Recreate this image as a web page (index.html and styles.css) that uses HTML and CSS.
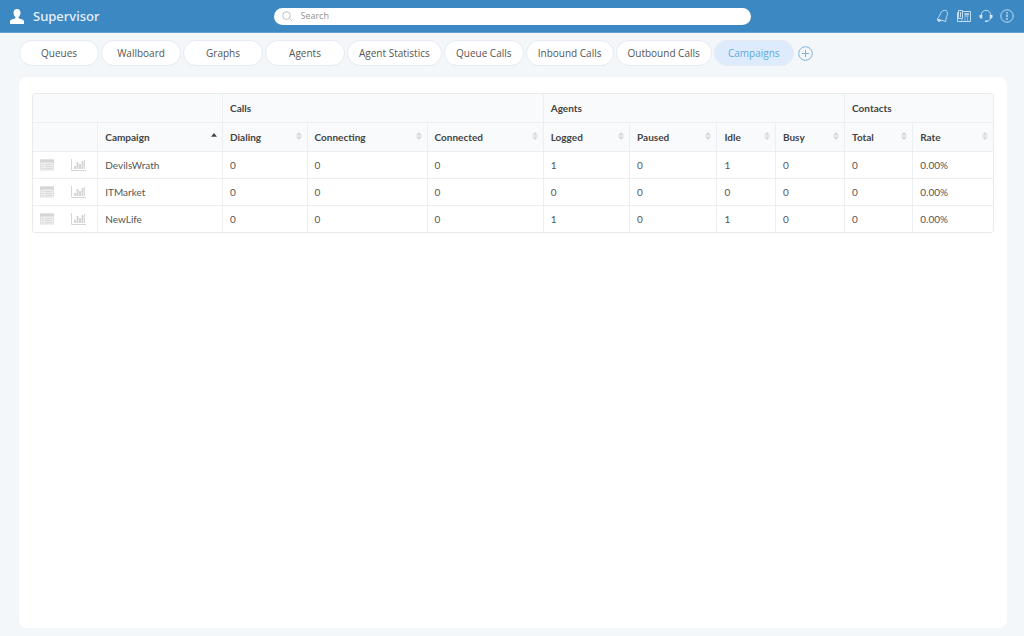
FILE: index.html
```html
<!DOCTYPE html>
<html lang="en">
<head>
<meta charset="utf-8">
<meta name="viewport" content="width=device-width, initial-scale=1">
<title>Supervisor</title>
<link rel="stylesheet" href="styles.css">
</head>
<body>
<svg class="sprite" aria-hidden="true">
  <symbol id="list" viewBox="0 0 14 12">
    <rect x=".5" y="1" width="13" height="10" fill="#efefef" stroke="#e0e0e0"/>
    <path d="M0 .500h14v3H0z" fill="#d6d6d6"/>
    <path d="M2 5.500h2M5 5.500h7M2 7.500h2M5 7.500h7M2 9.500h2M5 9.500h7" stroke="#dadada"/>
  </symbol>
  <symbol id="chart" viewBox="0 0 15 12">
    <path d="M.5 0v11.500H15" fill="none" stroke="#d6d6d6"/>
    <path d="M4 10V7M6.500 10V3M9 10V5M11.500 10V2" stroke="#d2d2d2" stroke-width="1.800"/>
    <path d="M13.500 10V1" stroke="#d6d6d6"/>
  </symbol>
  <symbol id="sort" viewBox="0 0 6 8">
    <path d="M3 0l3 3.500H0zM3 8l3-3.500H0z" fill="#d6d8da"/>
  </symbol>
</svg>
<header class="topbar">
  <div class="brand">
    <svg class="user" viewBox="0 0 14 15" aria-hidden="true"><path d="M7 0c2.100 0 3.500 1.500 3.500 3.700 0 1.700-.8 3.300-1.900 4.200v1.300l4.200 1.600c.8.300 1.200 1 1.200 1.800V15H0v-2.400c0-.8.400-1.500 1.200-1.800l4.200-1.600V7.900C4.300 7 3.500 5.400 3.500 3.700 3.500 1.500 4.900 0 7 0z"/></svg>
    <h1 class="title">Supervisor</h1>
  </div>
  <label class="search">
    <svg class="lens" viewBox="0 0 12 12" aria-hidden="true"><circle cx="5" cy="5" r="4.200"/><path d="M8 8l3 3"/></svg>
    <input class="search-input" type="search" placeholder="Search" aria-label="Search">
  </label>
  <div class="actions">
    <button class="icon-button" aria-label="Notifications"><svg viewBox="0 0 14 14"><path d="M2 10C4 8.500 4.500 7 5.500 4.500 6.500 2 9 .8 11 1.500c1.800 1 1.800 3.500.8 6-.8 2-1.300 3.500-.8 5z"/><path d="M2.500 10.500c-.3 2 2.200 2.800 3.500 1z" fill="#c4dcf1"/></svg></button>
    <button class="icon-button" aria-label="Phone"><svg class="wide" viewBox="0 0 16 14"><path d="M2.500 3.500h-1v9h13v-10H7M2.500 1.500h4v8h-4zM8.500 9h1M11 9h1M8.500 11h1M11 11h1M5.500 11h1M8.500 7h4M4.500 3v5"/><path d="M8.500 5h4.500" stroke-width="1.600"/></svg></button>
    <button class="icon-button" aria-label="Support"><svg viewBox="0 0 14 14"><path d="M2.300 6.500V6a4.700 4.700 0 0 1 9.400 0v.5M11.500 9c0 2-1.500 3-3.500 3.300"/><path d="M.5 6h2.800v3.400H1.700L.5 8.400zM13.500 6h-2.800v3.400h1.600l1.200-1zM6 11.500h2.500V13H6z" fill="#d5e5f4" stroke="none"/></svg></button>
    <button class="icon-button" aria-label="Information"><svg viewBox="0 0 14 14"><circle cx="7" cy="7" r="6.200"/><path d="M7 3v1.500M7 5.500v2.500M7 9v1.800" stroke-width="1.500"/></svg></button>
  </div>
</header>
<nav class="tabs" aria-label="Views">
  <button class="tab">Queues</button>
  <button class="tab">Wallboard</button>
  <button class="tab">Graphs</button>
  <button class="tab">Agents</button>
  <button class="tab">Agent Statistics</button>
  <button class="tab">Queue Calls</button>
  <button class="tab">Inbound Calls</button>
  <button class="tab">Outbound Calls</button>
  <button class="tab active" aria-current="page">Campaigns</button>
  <button class="add" aria-label="Add tab"><svg viewBox="0 0 15 15"><circle cx="7.500" cy="7.500" r="6.800"/><path d="M7.500 4v7M4 7.500h7"/></svg></button>
</nav>
<main class="panel">
  <table class="grid">
    <colgroup><col class="c-icons"><col class="c-campaign"><col class="c-dialing"><col class="c-connecting"><col class="c-connected"><col class="c-logged"><col class="c-paused"><col class="c-idle"><col class="c-busy"><col class="c-total"><col class="c-rate"></colgroup>
    <thead>
      <tr><th colspan="2"></th><th colspan="3">Calls</th><th colspan="4">Agents</th><th colspan="2">Contacts</th></tr>
      <tr>
        <th></th>
        <th aria-sort="ascending"><div class="head">Campaign<svg class="sort" viewBox="0 0 6 8"><path d="M3 1l3 3.800H0z" fill="#444"/></svg></div></th>
        <th><div class="head">Dialing<svg class="sort"><use href="#sort"/></svg></div></th>
        <th><div class="head">Connecting<svg class="sort"><use href="#sort"/></svg></div></th>
        <th><div class="head">Connected<svg class="sort"><use href="#sort"/></svg></div></th>
        <th><div class="head">Logged<svg class="sort"><use href="#sort"/></svg></div></th>
        <th><div class="head">Paused<svg class="sort"><use href="#sort"/></svg></div></th>
        <th><div class="head">Idle<svg class="sort"><use href="#sort"/></svg></div></th>
        <th><div class="head">Busy<svg class="sort"><use href="#sort"/></svg></div></th>
        <th><div class="head">Total<svg class="sort"><use href="#sort"/></svg></div></th>
        <th><div class="head">Rate<svg class="sort"><use href="#sort"/></svg></div></th>
      </tr>
    </thead>
    <tbody>
      <tr><td><div class="row-icons"><button class="row-button" aria-label="Details"><svg><use href="#list"/></svg></button><button class="row-button" aria-label="Chart"><svg class="bars"><use href="#chart"/></svg></button></div></td><td>DevilsWrath</td><td>0</td><td>0</td><td>0</td><td>1</td><td>0</td><td>1</td><td>0</td><td>0</td><td>0.00%</td></tr>
      <tr><td><div class="row-icons"><button class="row-button" aria-label="Details"><svg><use href="#list"/></svg></button><button class="row-button" aria-label="Chart"><svg class="bars"><use href="#chart"/></svg></button></div></td><td>ITMarket</td><td>0</td><td>0</td><td>0</td><td>0</td><td>0</td><td>0</td><td>0</td><td>0</td><td>0.00%</td></tr>
      <tr><td><div class="row-icons"><button class="row-button" aria-label="Details"><svg><use href="#list"/></svg></button><button class="row-button" aria-label="Chart"><svg class="bars"><use href="#chart"/></svg></button></div></td><td>NewLife</td><td>0</td><td>0</td><td>0</td><td>1</td><td>0</td><td>1</td><td>0</td><td>0</td><td>0.00%</td></tr>
    </tbody>
  </table>
</main>
</body>
</html>
```
FILE: styles.css
```css
* { box-sizing: border-box; }
body {
  margin: 0;
  min-height: 100vh;
  display: flex;
  flex-direction: column;
  background: #f3f7f9;
  color: #555;
  font-family: "Open Sans", "Noto Sans", sans-serif;
}
button { padding: 0; border: 0; background: none; font: inherit; color: inherit; cursor: pointer; }
svg { display: block; }
.sprite { position: absolute; width: 0; height: 0; }

.topbar {
  display: grid;
  grid-template-columns: 1fr 477px 1fr;
  align-items: center;
  height: 33px;
  padding: 0 10px;
  background: #3c88c3;
  border-bottom: 1px solid #63a0d0;
}
.brand { display: flex; align-items: center; gap: 9px; }
.user { width: 14px; height: 15px; fill: #fff; }
.title { margin: 0; color: #e9f1f9; font-size: 13px; line-height: 18px; font-weight: 500; font-family: "Noto Sans", sans-serif; }
.search {
  display: flex;
  align-items: center;
  gap: 8px;
  height: 17px;
  padding: 0 8px;
  border-radius: 9px;
  background: #fff;
}
.lens { width: 11px; height: 11px; fill: none; stroke: #bbb; }
.search-input {
  flex: 1;
  min-width: 0;
  padding: 0;
  border: 0;
  outline: 0;
  background: none;
  font: 9px/14px "Noto Sans", sans-serif;
  color: #555;
}
.search-input::placeholder { color: #999; }
.actions { display: flex; justify-content: flex-end; align-items: center; gap: 7px; }
.icon-button svg { width: 14px; height: 14px; fill: none; stroke: #c4dcf1; stroke-width: 1; }
.icon-button .wide { width: 16px; }

.tabs { display: flex; flex-wrap: wrap; align-items: center; gap: 2px; padding: 7px 19px 11px; }
.tab {
  min-width: 80px;
  height: 26px;
  padding: 0 11px;
  border: 1px solid #e6ebf3;
  border-radius: 13px;
  background: #fff;
  font-size: 10px;
  line-height: 14px;
}
.tab.active { background: #deebfd; color: #60aadb; }
.add { margin-left: 2px; }
.add svg { width: 15px; height: 15px; fill: none; stroke: #7db4de; }

.panel { flex: 1; margin: 0 17px 8px 19px; padding: 16px 13px; border-radius: 8px; background: #fff; }
.grid {
  width: 100%;
  table-layout: fixed;
  border: 1px solid #e8ebec;
  border-radius: 3px;
  border-spacing: 0;
  overflow: hidden;
  font-family: Lato, sans-serif;
  font-size: 10px;
  line-height: 14px;
}
.grid th, .grid td { padding: 0 7px; border: 0 solid #eceff0; border-width: 0 1px 1px 0; text-align: left; }
.grid th:last-child, .grid td:last-child { border-right: 0; }
.grid tbody tr:last-child td { border-bottom: 0; }
.grid th { height: 29px; background: #f9fafb; color: #444; font-weight: 700; }
.grid td { height: 27px; }
.grid tbody tr:last-child td { height: 26px; }
.c-icons { width: 6.8%; }
.c-campaign { width: 13.0%; }
.c-dialing { width: 8.8%; }
.c-connecting { width: 12.5%; }
.c-connected { width: 12.1%; }
.c-logged { width: 9%; }
.c-paused { width: 9.1%; }
.c-idle { width: 6.1%; }
.c-busy { width: 7.2%; }
.c-total { width: 7.1%; }
.c-rate { width: 8.3%; }
.head { display: flex; justify-content: space-between; align-items: center; }
.sort { width: 6px; height: 8px; margin-bottom: 2px; margin-right: -2px; }
.row-icons { display: flex; gap: 17px; }
.row-button svg { width: 14px; height: 12px; }
.row-button .bars { width: 15px; }
```
